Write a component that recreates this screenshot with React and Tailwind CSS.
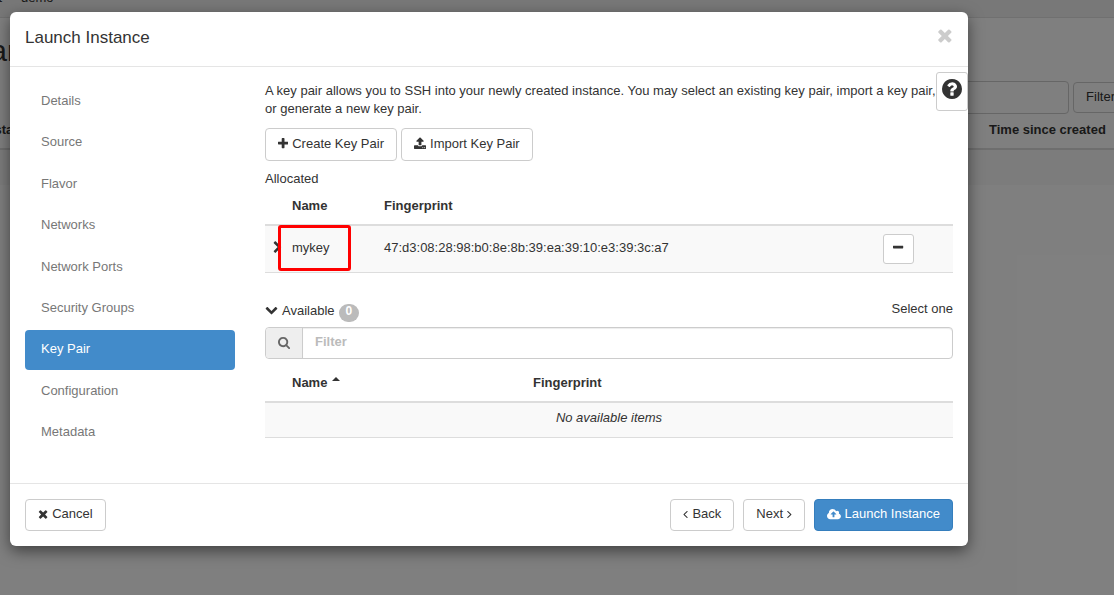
import { useState } from "react";

const ICONS = {
    plus: ["192 0 1408 1792", "M1600 736v192q0 40-28 68t-68 28h-416v416q0 40-28 68t-68 28h-192q-40 0-68-28t-28-68v-416h-416q-40 0-68-28t-28-68v-192q0-40 28-68t68-28h416v-416q0-40 28-68t68-28h192q40 0 68 28t28 68v416h416q40 0 68 28t28 68z"],
    minus: ["192 0 1408 1792", "M1600 736v192q0 40-28 68t-68 28h-1216q-40 0-68-28t-28-68v-192q0-40 28-68t68-28h1216q40 0 68 28t28 68z"],
    times: ["192 64 1408 1792", "M1490 1322q0 40-28 68l-136 136q-28 28-68 28t-68-28l-294-294-294 294q-28 28-68 28t-68-28l-136-136q-28-28-28-68t28-68l294-294-294-294q-28-28-28-68t28-68l136-136q28-28 68-28t68 28l294 294 294-294q28-28 68-28t68 28l136 136q28 28 28 68t-28 68l-294 294 294 294q28 28 28 68z"],
    upload: ["64 0 1664 1792", "M1344 1472q0-26-19-45t-45-19-45 19-19 45 19 45 45 19 45-19 19-45zm256 0q0-26-19-45t-45-19-45 19-19 45 19 45 45 19 45-19 19-45zm128-224v320q0 40-28 68t-68 28h-1472q-40 0-68-28t-28-68v-320q0-40 28-68t68-28h427q21 56 70.5 92t110.5 36h256q61 0 110.5-36t70.5-92h427q40 0 68 28t28 68zm-325-648q-17 40-59 40h-256v448q0 26-19 45t-45 19h-256q-26 0-45-19t-19-45v-448h-256q-42 0-59-40-17-39 14-69l448-448q18-19 45-19t45 19l448 448q31 30 14 69z"],
    cloud: ["0 64 1920 1792", "M1280 928q0-14-9-23l-352-352q-9-9-23-9t-23 9l-351 351q-10 12-10 24 0 14 9 23t23 9h224v352q0 13 9.5 22.5t22.5 9.5h192q13 0 22.5-9.5t9.5-22.5v-352h224q13 0 22.5-9.5t9.5-22.5zm640 288q0 159-112.5 271.5t-271.5 112.5h-1088q-185 0-316.5-131.5t-131.5-316.5q0-130 70-240t188-165q-2-30-2-43 0-212 150-362t362-150q156 0 285.5 87t188.5 231q71-62 166-62 106 0 181 75t75 181q0 76-41 138 130 31 213.5 135.5t83.5 238.5z"],
    search: ["64 0 1728 1792", "M1216 832q0-185-131.5-316.5t-316.5-131.5-316.5 131.5-131.5 316.5 131.5 316.5 316.5 131.5 316.5-131.5 131.5-316.5zm512 832q0 52-38 90t-90 38q-54 0-90-38l-343-342q-179 124-399 124-143 0-273.5-55.5t-225-150-150-225-55.5-273.5 55.5-273.5 150-225 225-150 273.5-55.5 273.5 55.5 225 150 150 225 55.5 273.5q0 220-124 399l343 343q37 37 37 90z"],
    angleLeft: ["560 64 740 1792", "M1203 544q0 13-10 23l-393 393 393 393q10 10 10 23t-10 23l-50 50q-10 10-23 10t-23-10l-466-466q-10-10-10-23t10-23l466-466q10-10 23-10t23 10l50 50q10 10 10 23z"],
    angleRight: ["560 64 640 1792", "M1171 960q0 13-10 23l-466 466q-10 10-23 10t-23-10l-50-50q-10-10-10-23t10-23l393-393-393-393q-10-10-10-23t10-23l50-50q10-10 23-10t23 10l466 466q10 10 10 23z"],
    chevronDown: ["0 128 1792 1792", "M1683 808l-742 741q-19 19-45 19t-45-19l-742-741q-19-19-19-45.5t19-45.5l166-165q19-19 45-19t45 19l531 531 531-531q19-19 45-19t45 19l166 165q19 19 19 45.5t-19 45.5z"],
    chevronRight: ["256 0 1280 1792", "M1363 877l-742 742q-19 19-45 19t-45-19l-166-166q-19-19-19-45t19-45l531-531-531-531q-19-19-19-45t19-45l166-166q19-19 45-19t45 19l742 742q19 19 19 45t-19 45z"],
    question: ["128 128 1536 1536", "M1024 1376v-192q0-14-9-23t-23-9h-192q-14 0-23 9t-9 23v192q0 14 9 23t23 9h192q14 0 23-9t9-23zm256-672q0-88-55.5-163t-138.5-116-170-41q-243 0-371 213-15 24 8 42l132 100q7 6 19 6 16 0 25-12 53-68 86-92 34-24 86-24 48 0 85.5 26t37.5 59q0 38-20 61t-68 45q-63 28-115.5 86.5t-52.5 125.5v36q0 14 9 23t23 9h192q14 0 23-9t9-23q0-19 21.5-49.5t54.5-49.5q32-18 49-28.5t46-35 44.5-48 28-60.5 12.5-81zm384 192q0 209-103 385.5t-279.5 279.5-385.5 103-385.5-103-279.5-279.5-103-385.5 103-385.5 279.5-279.5 385.5-103 385.5 103 279.5 279.5 103 385.5z"],
    caretUp: ["0 0 8 4", "M0 4L4 0L8 4z"],
};

const STEPS = ["Details", "Source", "Flavor", "Networks", "Network Ports", "Security Groups", "Key Pair", "Configuration", "Metadata"];

function Icon({ name, className = "h-[13px]" }) {
    const [viewBox, d] = ICONS[name];
    return (
        <svg viewBox={viewBox} className={`w-auto shrink-0 ${className}`} fill="currentColor" aria-hidden="true">
            <path d={d} />
        </svg>
    );
}

function Button({ primary, children }) {
    return (
        <button
            type="button"
            className={`flex min-h-8 items-center gap-1 rounded border px-3 pb-[2px] whitespace-nowrap ${primary ? "border-[#357ebd] bg-[#428bca] text-white" : "border-[#ccc] bg-white text-[#333]"}`}
        >
            {children}
        </button>
    );
}

function InstancesPage() {
    return (
        <div className="flex flex-col" aria-hidden="true">
            <div className="-mt-8 h-[50px] border-b border-[#e0e0e0] bg-[#f0f0f0] pt-[21px]">
                <div className="-ml-[37px]">default &nbsp;•&nbsp; demo</div>
            </div>
            <div className="-mr-[14px] -ml-[58px] flex flex-col pt-4">
                <h1 className="text-[30px] leading-[33px] font-medium">Instances</h1>
                <div className="mt-[14px] flex items-center justify-end gap-1">
                    <input type="text" aria-label="Instance filter" className="h-[33px] w-[400px] rounded border border-[#ccc] bg-white" />
                    <button type="button" className="h-[31px] rounded border border-[#ccc] bg-white px-3 pb-[2px]">Filter</button>
                </div>
                <table className="w-full table-fixed text-left">
                    <thead>
                        <tr className="h-[35px] border-b-2 border-[#ddd]">
                            <th className="w-[33px]"></th>
                            <th className="px-2 pb-[3px]">Instance Name</th>
                            <th className="w-[147px] px-2 pb-[3px] whitespace-nowrap">Time since created</th>
                        </tr>
                    </thead>
                    <tbody>
                        <tr className="h-9 bg-[#f9f9f9]">
                            <td colSpan={3}></td>
                        </tr>
                    </tbody>
                </table>
            </div>
        </div>
    );
}

function Steps({ active, onSelect }) {
    return (
        <nav className="w-[210px] shrink-0">
            <ul className="flex h-[371px] flex-col justify-between">
                {STEPS.map((step) => (
                    <li key={step}>
                        <a
                            href="#"
                            onClick={() => onSelect(step)}
                            className={`flex h-10 items-center rounded px-4 pb-[2px] ${step === active ? "bg-[#428bca] text-white" : "text-[#777]"}`}
                        >
                            {step}
                        </a>
                    </li>
                ))}
            </ul>
        </nav>
    );
}

function Allocated() {
    return (
        <table className="w-full table-fixed border-b border-[#ddd] text-left">
            <thead>
                <tr className="h-[37px] border-b-2 border-[#ddd]">
                    <th className="w-[19px]"></th>
                    <th className="w-[92px] px-2 pb-px">Name</th>
                    <th className="px-2 pb-px">Fingerprint</th>
                    <th className="w-[78px]"></th>
                </tr>
            </thead>
            <tbody>
                <tr className="h-[47px] bg-[#f9f9f9]">
                    <td className="pb-[3px] pl-2"><Icon name="chevronRight" /></td>
                    <td className="relative px-2 pb-px">
                        mykey
                        <div className="absolute -top-px -left-[6px] h-[46px] w-[73px] rounded-[3px] border-3 border-[#f00]" />
                    </td>
                    <td className="px-2 pb-px">47:d3:08:28:98:b0:8e:8b:39:ea:39:10:e3:39:3c:a7</td>
                    <td className="px-2">
                        <button type="button" aria-label="Remove mykey" className="flex h-[30px] w-[31px] items-center justify-center rounded-[3px] border border-[#ccc] bg-white pb-[2px]">
                            <Icon name="minus" />
                        </button>
                    </td>
                </tr>
            </tbody>
        </table>
    );
}

function Available() {
    return (
        <section className="mt-[27px]">
            <div className="flex h-[27px] items-start justify-between">
                <div className="flex items-start gap-1 pt-[2px]">
                    <Icon name="chevronDown" className="mt-[2px] h-[13px]" />
                    <span>Available</span>
                    <span className="mt-[2px] flex h-[18px] items-start justify-center rounded-full bg-[#bbb] px-[7px] text-xs leading-[14px] font-bold text-white">0</span>
                </div>
                <span>Select one</span>
            </div>
            <div className="flex h-8 rounded border border-[#ccc]">
                <label htmlFor="key-filter" className="flex w-9 items-center justify-center rounded-l bg-[#eee] text-[#666]">
                    <Icon name="search" />
                </label>
                <input
                    id="key-filter"
                    type="text"
                    placeholder="Filter"
                    className="min-w-0 flex-1 rounded-r border-l border-[#ccc] px-3 pb-[2px] font-bold shadow-[inset_0_1px_1px_rgba(0,0,0,0.075)] placeholder:text-[#bbb]"
                />
            </div>
            <table className="mt-1 w-full table-fixed border-b border-[#ddd] text-left">
                <thead>
                    <tr className="h-[39px] border-b-2 border-[#ddd]">
                        <th className="w-[19px]"></th>
                        <th className="w-[241px] px-2 pt-[2px]">
                            <div className="flex items-center gap-[5px]">Name <Icon name="caretUp" className="mb-[7px] h-1" /></div>
                        </th>
                        <th className="px-2 pt-[2px]">Fingerprint</th>
                    </tr>
                </thead>
                <tbody>
                    <tr className="h-9 bg-[#f9f9f9]">
                        <td colSpan={3} className="pb-[3px] text-center italic">No available items</td>
                    </tr>
                </tbody>
            </table>
        </section>
    );
}

export default function App() {
    const [step, setStep] = useState("Key Pair");

    return (
        <div className="relative min-h-screen overflow-hidden bg-white font-['Liberation_Sans',Arial,sans-serif] text-[13px] leading-[18px] text-[#333]">
            <InstancesPage />
            <div className="absolute inset-0 bg-black/50 pt-3 pr-[146px] pl-[10px]">
                <div role="dialog" aria-label="Launch Instance" className="rounded-md bg-white shadow-[0_5px_15px_rgba(0,0,0,0.5)]">
                    <header className="flex h-[55px] items-start justify-between border-b border-[#e5e5e5] px-[15px] pt-[14px]">
                        <h2 className="text-[17px] leading-6">Launch Instance</h2>
                        <button type="button" aria-label="Close" className="text-[#ccc]"><Icon name="times" className="h-5" /></button>
                    </header>

                    <div className="relative flex gap-[30px] px-[15px] pt-[15px] pb-[30px]">
                        <Steps active={step} onSelect={setStep} />
                        <main className="min-w-0 flex-1">
                            <p>
                                A key pair allows you to SSH into your newly created instance. You may select an existing key pair, import a key pair,<br />
                                or generate a new key pair.
                            </p>
                            <div className="mt-[10px] flex h-[33px] gap-1">
                                <Button><Icon name="plus" />Create Key Pair</Button>
                                <Button><Icon name="upload" />Import Key Pair</Button>
                            </div>
                            <div className="mt-[9px]">Allocated</div>
                            <Allocated />
                            <Available />
                        </main>
                        <button type="button" aria-label="Help" className="absolute top-[5px] right-0 flex h-[39px] w-8 justify-center rounded-[3px] border border-[#ccc] bg-white pt-[6px]">
                            <Icon name="question" className="h-5" />
                        </button>
                    </div>

                    <footer className="flex items-center justify-between border-t border-[#e5e5e5] p-[15px]">
                        <Button><Icon name="times" />Cancel</Button>
                        <div className="flex gap-[9px]">
                            <Button><Icon name="angleLeft" />Back</Button>
                            <Button>Next<Icon name="angleRight" /></Button>
                            <Button primary><Icon name="cloud" />Launch Instance</Button>
                        </div>
                    </footer>
                </div>
            </div>
        </div>
    );
}
